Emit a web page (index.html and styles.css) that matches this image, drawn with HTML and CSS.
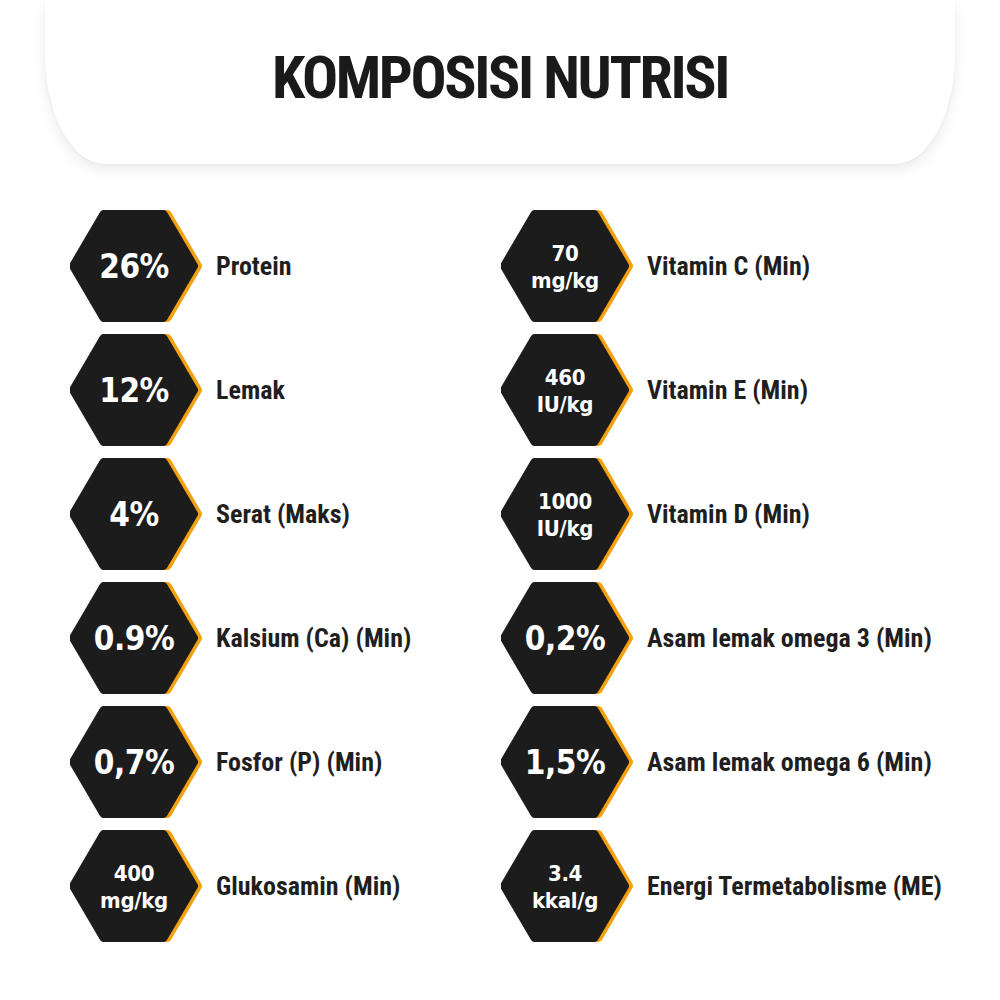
FILE: index.html
```html
<!DOCTYPE html>
<html lang="id">
<head>
<meta charset="utf-8">
<title>Komposisi Nutrisi</title>
<link rel="stylesheet" href="styles.css">
</head>
<body>
<div class="page">
  <header class="card">
    <h1 class="title">KOMPOSISI NUTRISI</h1>
  </header>
  <main class="grid">
    <div class="item"><div class="hex"><svg viewBox="0 0 134 112" class="hex-bg"><polygon class="hex-o" points="37.5,4 97.5,4 128,56 97.5,108 37.5,108 7,56"/><polygon class="hex-b" points="33.5,4 93.5,4 124,56 93.5,108 33.5,108 3,56"/></svg><span class="val">26%</span></div><span class="label">Protein</span></div>
    <div class="item"><div class="hex"><svg viewBox="0 0 134 112" class="hex-bg"><polygon class="hex-o" points="37.5,4 97.5,4 128,56 97.5,108 37.5,108 7,56"/><polygon class="hex-b" points="33.5,4 93.5,4 124,56 93.5,108 33.5,108 3,56"/></svg><span class="val small">70<br>mg/kg</span></div><span class="label">Vitamin C (Min)</span></div>

    <div class="item"><div class="hex"><svg viewBox="0 0 134 112" class="hex-bg"><polygon class="hex-o" points="37.5,4 97.5,4 128,56 97.5,108 37.5,108 7,56"/><polygon class="hex-b" points="33.5,4 93.5,4 124,56 93.5,108 33.5,108 3,56"/></svg><span class="val">12%</span></div><span class="label">Lemak</span></div>
    <div class="item"><div class="hex"><svg viewBox="0 0 134 112" class="hex-bg"><polygon class="hex-o" points="37.5,4 97.5,4 128,56 97.5,108 37.5,108 7,56"/><polygon class="hex-b" points="33.5,4 93.5,4 124,56 93.5,108 33.5,108 3,56"/></svg><span class="val small">460<br>IU/kg</span></div><span class="label">Vitamin E (Min)</span></div>

    <div class="item"><div class="hex"><svg viewBox="0 0 134 112" class="hex-bg"><polygon class="hex-o" points="37.5,4 97.5,4 128,56 97.5,108 37.5,108 7,56"/><polygon class="hex-b" points="33.5,4 93.5,4 124,56 93.5,108 33.5,108 3,56"/></svg><span class="val">4%</span></div><span class="label">Serat (Maks)</span></div>
    <div class="item"><div class="hex"><svg viewBox="0 0 134 112" class="hex-bg"><polygon class="hex-o" points="37.5,4 97.5,4 128,56 97.5,108 37.5,108 7,56"/><polygon class="hex-b" points="33.5,4 93.5,4 124,56 93.5,108 33.5,108 3,56"/></svg><span class="val small">1000<br>IU/kg</span></div><span class="label">Vitamin D (Min)</span></div>

    <div class="item"><div class="hex"><svg viewBox="0 0 134 112" class="hex-bg"><polygon class="hex-o" points="37.5,4 97.5,4 128,56 97.5,108 37.5,108 7,56"/><polygon class="hex-b" points="33.5,4 93.5,4 124,56 93.5,108 33.5,108 3,56"/></svg><span class="val">0.9%</span></div><span class="label">Kalsium (Ca) (Min)</span></div>
    <div class="item"><div class="hex"><svg viewBox="0 0 134 112" class="hex-bg"><polygon class="hex-o" points="37.5,4 97.5,4 128,56 97.5,108 37.5,108 7,56"/><polygon class="hex-b" points="33.5,4 93.5,4 124,56 93.5,108 33.5,108 3,56"/></svg><span class="val">0,2%</span></div><span class="label">Asam lemak omega 3 (Min)</span></div>

    <div class="item"><div class="hex"><svg viewBox="0 0 134 112" class="hex-bg"><polygon class="hex-o" points="37.5,4 97.5,4 128,56 97.5,108 37.5,108 7,56"/><polygon class="hex-b" points="33.5,4 93.5,4 124,56 93.5,108 33.5,108 3,56"/></svg><span class="val">0,7%</span></div><span class="label">Fosfor (P) (Min)</span></div>
    <div class="item"><div class="hex"><svg viewBox="0 0 134 112" class="hex-bg"><polygon class="hex-o" points="37.5,4 97.5,4 128,56 97.5,108 37.5,108 7,56"/><polygon class="hex-b" points="33.5,4 93.5,4 124,56 93.5,108 33.5,108 3,56"/></svg><span class="val">1,5%</span></div><span class="label">Asam lemak omega 6 (Min)</span></div>

    <div class="item"><div class="hex"><svg viewBox="0 0 134 112" class="hex-bg"><polygon class="hex-o" points="37.5,4 97.5,4 128,56 97.5,108 37.5,108 7,56"/><polygon class="hex-b" points="33.5,4 93.5,4 124,56 93.5,108 33.5,108 3,56"/></svg><span class="val small">400<br>mg/kg</span></div><span class="label">Glukosamin (Min)</span></div>
    <div class="item"><div class="hex"><svg viewBox="0 0 134 112" class="hex-bg"><polygon class="hex-o" points="37.5,4 97.5,4 128,56 97.5,108 37.5,108 7,56"/><polygon class="hex-b" points="33.5,4 93.5,4 124,56 93.5,108 33.5,108 3,56"/></svg><span class="val small">3.4<br>kkal/g</span></div><span class="label">Energi Termetabolisme (ME)</span></div>
  </main>
</div>
</body>
</html>
```

FILE: styles.css
```css
html, body {
  margin: 0;
  padding: 0;
  background: #ffffff;
}

.page {
  width: 1000px;
  height: 1000px;
  overflow: hidden;
  background: #ffffff;
}

.card {
  margin: 0 45px;
  height: 164px;
  background: #ffffff;
  border-radius: 0 0 60px 60px / 0 0 110px 110px;
  box-shadow: 0 6px 14px rgba(0, 0, 0, 0.08), 0 1px 3px rgba(0, 0, 0, 0.04);
  display: flex;
  align-items: center;
  justify-content: center;
}

.title {
  margin: 0 0 8px 0;
  font-family: "Liberation Sans Narrow", "Roboto Condensed", "Liberation Sans", sans-serif;
  font-stretch: condensed;
  font-weight: 700;
  font-size: 60px;
  letter-spacing: -2.4px;
  color: #1a1a1a;
  line-height: 1;
}

.grid {
  display: grid;
  grid-template-columns: 431px 431px;
  grid-auto-rows: 112px;
  row-gap: 12px;
  padding: 46px 0 0 70px;
}

.item {
  display: flex;
  align-items: center;
  gap: 12px;
}

.hex {
  position: relative;
  width: 134px;
  height: 112px;
  flex: none;
  display: flex;
  align-items: center;
  justify-content: center;
}

.hex-bg {
  position: absolute;
  left: 0;
  top: 0;
  width: 134px;
  height: 112px;
}

.hex-o {
  fill: #f5a00f;
  stroke: #f5a00f;
  stroke-width: 8;
  stroke-linejoin: round;
}

.hex-b {
  fill: #1c1c1c;
  stroke: #1c1c1c;
  stroke-width: 8;
  stroke-linejoin: round;
}

.val {
  position: relative;
  margin-right: 6px;
  font-family: "DejaVu Sans Condensed", "DejaVu Sans", sans-serif;
  font-weight: 700;
  font-size: 33px;
  letter-spacing: -0.5px;
  color: #ffffff;
  text-align: center;
  line-height: 1;
}

.val.small {
  font-size: 22px;
  line-height: 27px;
  letter-spacing: -0.3px;
  margin-top: 2px;
}

.label {
  font-family: "Liberation Sans Narrow", "Roboto Condensed", "Liberation Sans", sans-serif;
  font-stretch: condensed;
  font-weight: 700;
  font-size: 26px;
  color: #1f1f1f;
  line-height: 1;
  white-space: nowrap;
}
```
